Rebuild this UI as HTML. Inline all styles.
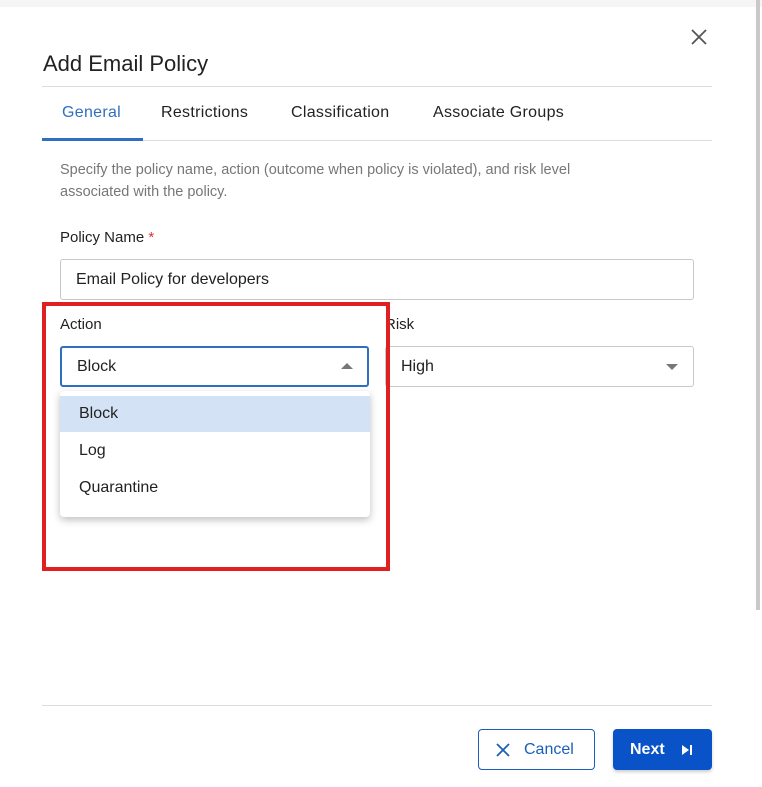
<!DOCTYPE html>
<html><head><style>
*{box-sizing:border-box;margin:0;padding:0}
body{width:762px;height:787px;background:#fff;font-family:"Liberation Sans",sans-serif;color:#222;position:relative;overflow:hidden}
.a{position:absolute}
.sel{position:absolute;height:41px;border:1px solid #c8c8c8;border-radius:3px;font-size:16px;padding:0 15px;line-height:39px;color:#222}
</style></head><body>
<div class="a" style="left:0;top:0;width:762px;height:7px;background:#f5f5f5"></div>
<div class="a" style="left:756px;top:0;width:4px;height:610px;background:#c9c9c9"></div>
<svg class="a" style="left:690px;top:28px" width="18" height="18"><path d="M2 2L16 16M16 2L2 16" stroke="#555" stroke-width="1.8"/></svg>
<div class="a" style="left:43px;top:51px;font-size:22px;color:#222">Add Email Policy</div>
<div class="a" style="left:42px;top:86px;width:670px;height:1px;background:#ddd"></div>
<div class="a" style="left:62px;top:104px;font-size:16px;color:#2f6fbf;letter-spacing:0.3px">General</div>
<div class="a" style="left:161px;top:104px;font-size:16px;letter-spacing:0.3px">Restrictions</div>
<div class="a" style="left:291px;top:104px;font-size:16px;letter-spacing:0.3px">Classification</div>
<div class="a" style="left:433px;top:104px;font-size:16px;letter-spacing:0.3px">Associate Groups</div>
<div class="a" style="left:42px;top:140px;width:670px;height:1px;background:#ddd"></div>
<div class="a" style="left:42px;top:138px;width:101px;height:3px;background:#2f6fbf"></div>
<div class="a" style="left:60px;top:159px;font-size:14.5px;color:#777;line-height:22px;width:580px">Specify the policy name, action (outcome when policy is violated), and risk level associated with the policy.</div>
<div class="a" style="left:60px;top:229px;font-size:15px">Policy Name <span style="color:#d33">*</span></div>
<div class="sel" style="left:60px;top:259px;width:634px">Email Policy for developers</div>
<div class="a" style="left:60px;top:316px;font-size:15px">Action</div>
<div class="a" style="left:385px;top:316px;font-size:15px">Risk</div>
<div class="sel" style="left:385px;top:346px;width:309px;padding-left:15px">High</div>
<div class="a" style="left:666px;top:364px;width:0;height:0;border-left:6px solid transparent;border-right:6px solid transparent;border-top:6px solid #777"></div>
<div class="sel" style="left:60px;top:346px;width:309px;border:2px solid #2f6fbf;line-height:37px">Block</div>
<div class="a" style="left:341px;top:363px;width:0;height:0;border-left:6px solid transparent;border-right:6px solid transparent;border-bottom:6px solid #777"></div>
<div class="a" style="left:60px;top:391px;width:310px;height:126px;background:#fff;border-radius:4px;box-shadow:0 3px 8px rgba(0,0,0,.25)">
<div style="margin-top:5px;height:36px;background:#d3e3f5;padding-left:19px;line-height:36px;font-size:16px">Block</div>
<div style="height:37px;padding-left:19px;line-height:37px;font-size:16px">Log</div>
<div style="height:37px;padding-left:19px;line-height:37px;font-size:16px">Quarantine</div>
</div>
<div class="a" style="left:42px;top:302px;width:348px;height:269px;border:4px solid #e02020"></div>
<div class="a" style="left:42px;top:705px;width:670px;height:1px;background:#ddd"></div>
<div class="a" style="left:478px;top:729px;width:117px;height:41px;border:1px solid #1c5fb8;border-radius:4px;color:#1c5fb8;font-size:16px;line-height:39px;padding-left:45px">Cancel</div>
<svg class="a" style="left:496px;top:743px" width="14" height="14"><path d="M1 1L13 13M13 1L1 13" stroke="#1c5fb8" stroke-width="1.8"/></svg>
<div class="a" style="left:613px;top:729px;width:99px;height:41px;background:#0a52c8;border-radius:4px;color:#fff;font-size:16px;font-weight:bold;line-height:41px;padding-left:17px;box-shadow:0 2px 3px rgba(0,0,0,.2)">Next</div>
<svg class="a" style="left:680px;top:743px" width="14" height="14"><path d="M2 2L9 7L2 12Z" fill="#fff"/><rect x="10" y="2" width="2" height="10" fill="#fff"/></svg>
</body></html>
